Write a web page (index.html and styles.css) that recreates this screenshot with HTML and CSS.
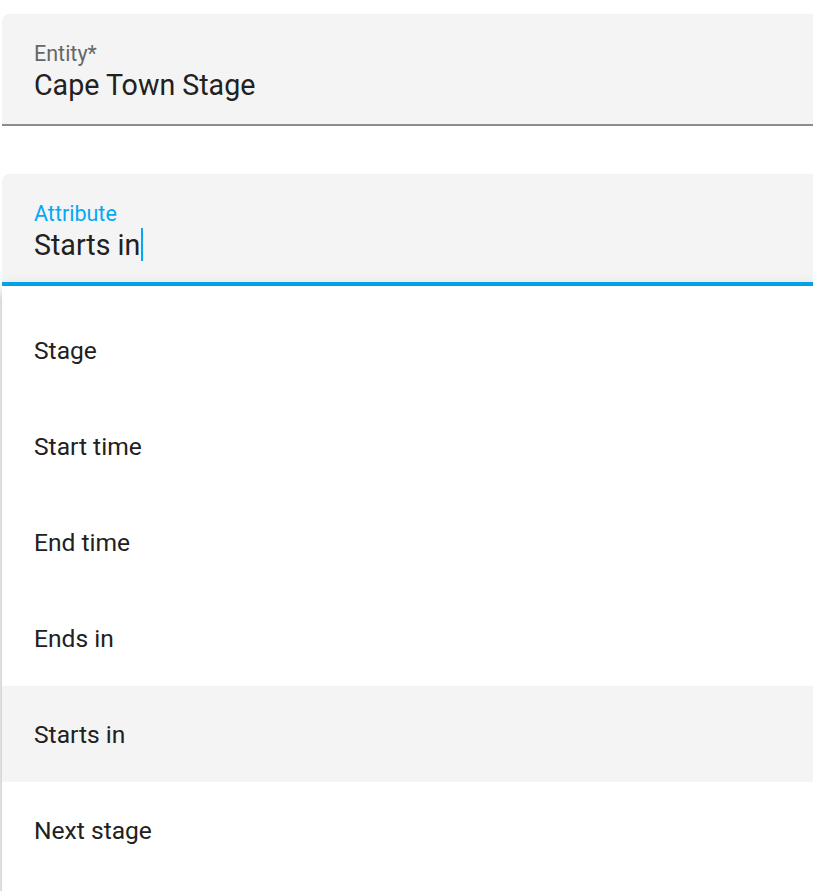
FILE: index.html
```html
<!DOCTYPE html>
<html lang="en">
<head>
<meta charset="utf-8">
<title>Attribute picker</title>
<link rel="stylesheet" href="styles.css">
</head>
<body>
<div class="page">
  <div class="field field--idle">
    <div class="field-label">Entity*</div>
    <div class="field-value">Cape Town Stage</div>
  </div>
  <div class="field field--focused">
    <div class="field-label">Attribute</div>
    <div class="field-value">Starts in<span class="caret"></span></div>
  </div>
  <ul class="menu">
    <li class="menu-item">Stage</li>
    <li class="menu-item">Start time</li>
    <li class="menu-item">End time</li>
    <li class="menu-item">Ends in</li>
    <li class="menu-item menu-item--active">Starts in</li>
    <li class="menu-item">Next stage</li>
  </ul>
</div>
</body>
</html>
```

FILE: styles.css
```css
html, body {
  margin: 0;
  padding: 0;
  background: #ffffff;
  overflow: hidden;
}

.page {
  padding: 14px 0 0 2px;
  font-family: Roboto, "Liberation Sans", Arial, sans-serif;
  color: #212121;
  width: 830px;
  height: 877px;
  overflow: hidden;
}

.field {
  box-sizing: border-box;
  height: 112px;
  background: #f4f4f4;
  border-radius: 7px 7px 0 0;
  padding: 28px 32px 0 32px;
}

.field--idle {
  border-bottom: 2px solid #8c8c8c;
  margin-bottom: 48px;
}

.field--focused {
  border-bottom: 4px solid #03a9f4;
}

.field-label {
  font-size: 21.5px;
  line-height: 24px;
  color: #666666;
}

.field--focused .field-label {
  color: #03a9f4;
}

.field-value {
  margin-top: 2px;
  font-size: 28.6px;
  line-height: 35px;
  white-space: nowrap;
}

.caret {
  display: inline-block;
  width: 2px;
  height: 33px;
  margin-left: 1px;
  background: #03a9f4;
  vertical-align: top;
}

.menu {
  list-style: none;
  margin: 0;
  padding: 16px 0 0 0;
  background: #ffffff;
  box-shadow: 0 5px 5px -3px rgba(0,0,0,.2), 0 8px 10px 1px rgba(0,0,0,.14), 0 3px 14px 2px rgba(0,0,0,.12);
  height: 700px;
}

.menu-item {
  height: 96px;
  display: flex;
  align-items: center;
  padding: 1px 0 0 32px;
  box-sizing: border-box;
  font-size: 24.6px;
}

.menu-item--active {
  background: #f4f4f4;
}
```
